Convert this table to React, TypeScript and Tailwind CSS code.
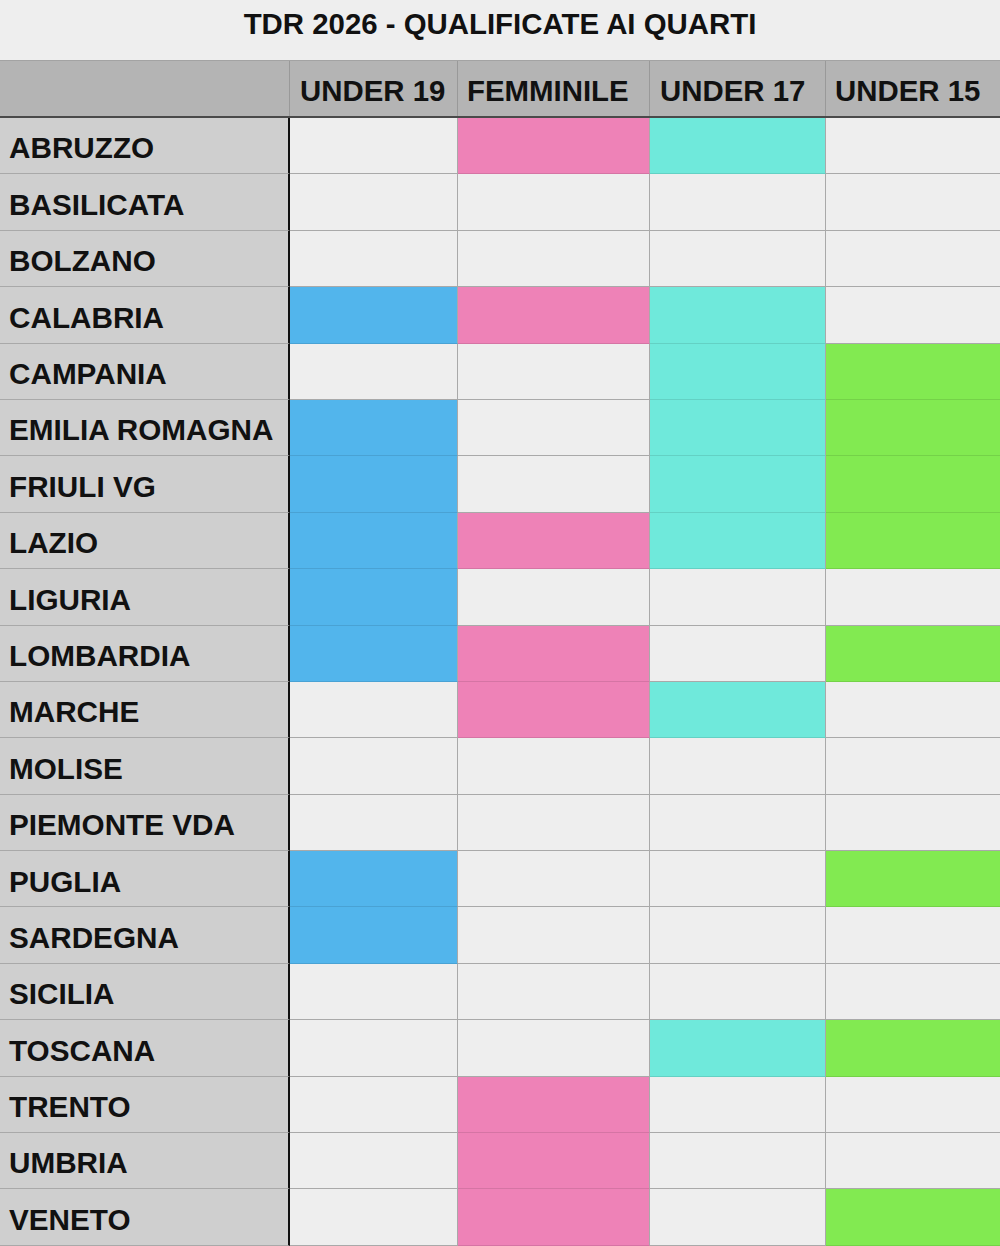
import React from "react";

const B = "bg-[#52b5ec] border-b-black/10";
const P = "bg-[#ee82b7] border-b-black/10";
const T = "bg-[#6fe9db] border-b-black/10";
const G = "bg-[#82ea51] border-b-black/10";
const E = "bg-[#eeeeee] border-b-[#a9a9a9]";

type Row = [string, boolean, boolean, boolean, boolean];

const rows: Row[] = [
  ["ABRUZZO", false, true, true, false],
  ["BASILICATA", false, false, false, false],
  ["BOLZANO", false, false, false, false],
  ["CALABRIA", true, true, true, false],
  ["CAMPANIA", false, false, true, true],
  ["EMILIA ROMAGNA", true, false, true, true],
  ["FRIULI VG", true, false, true, true],
  ["LAZIO", true, true, true, true],
  ["LIGURIA", true, false, false, false],
  ["LOMBARDIA", true, true, false, true],
  ["MARCHE", false, true, true, false],
  ["MOLISE", false, false, false, false],
  ["PIEMONTE VDA", false, false, false, false],
  ["PUGLIA", true, false, false, true],
  ["SARDEGNA", true, false, false, false],
  ["SICILIA", false, false, false, false],
  ["TOSCANA", false, false, true, true],
  ["TRENTO", false, true, false, false],
  ["UMBRIA", false, true, false, false],
  ["VENETO", false, true, false, true],
];

const cols = "grid grid-cols-[290px_168px_192px_176px_174px]";

export default function App() {
  return (
    <div
      className="w-[1000px] h-[1246px] bg-[#eeeeee] overflow-hidden text-[#111111]"
      style={{ fontFamily: '"Liberation Sans", Arial, sans-serif' }}
    >
      <div className="h-[60px] flex justify-center items-start pt-[7px] text-[29.4px] font-bold leading-[34px]">
        TDR 2026 - QUALIFICATE AI QUARTI
      </div>
      <div className={`${cols} h-[58px] bg-[#b4b4b4] border-t border-[#a3a3a3] border-b-2 border-b-[#4a4a4a] text-[29.4px] font-bold`}>
        <div className="border-r border-[#999999]" />
        <div className="border-r border-[#999999] flex items-center pl-[10px] pt-[5px]">UNDER 19</div>
        <div className="border-r border-[#999999] flex items-center pl-[9px] pt-[5px]">FEMMINILE</div>
        <div className="border-r border-[#999999] flex items-center pl-[10px] pt-[5px]">UNDER 17</div>
        <div className="flex items-center pl-[9px] pt-[5px]">UNDER 15</div>
      </div>
      {rows.map((r) => (
        <div key={r[0]} className={`${cols} h-[56.4px] text-[29.7px] font-bold`}>
          <div className="bg-[#cfcfcf] border-r-2 border-r-[#111111] border-b border-b-[#a9a9a9] flex items-center pl-[9px] pt-[6px] whitespace-nowrap">
            {r[0]}
          </div>
          <div className={`${r[1] ? B : E} border-r border-r-[#a9a9a9] border-b`} />
          <div className={`${r[2] ? P : E} border-r border-r-[#a9a9a9] border-b`} />
          <div className={`${r[3] ? T : E} border-r border-r-[#a9a9a9] border-b`} />
          <div className={`${r[4] ? G : E} border-b`} />
        </div>
      ))}
    </div>
  );
}
